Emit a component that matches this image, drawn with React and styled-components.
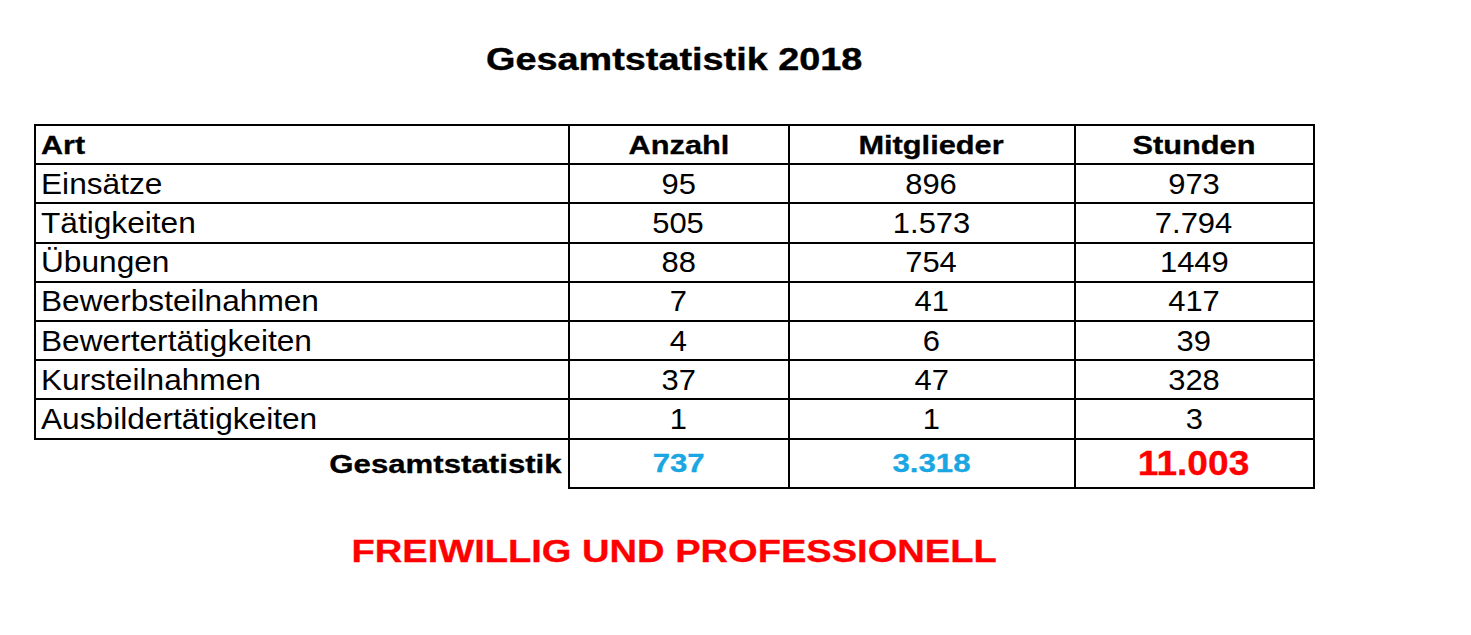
import React from "react";
import styled, { createGlobalStyle } from "styled-components";

const Global = createGlobalStyle`
  html, body { margin: 0; padding: 0; background: #fff; }
  body { font-family: "Liberation Sans", Arial, sans-serif; color: #000; }
`;

const Page = styled.div`
  width: 1471px;
  height: 635px;
  padding: 44px 0 0 34px;
  box-sizing: border-box;
`;

const Column = styled.div`
  width: 1280px;
  display: flex;
  flex-direction: column;
  align-items: center;
`;

const Stretch = styled.span`
  display: inline-block;
  transform: scaleX(${(p) => p.$sx || 1});
  transform-origin: ${(p) => p.$origin || "center"};
  white-space: nowrap;
`;

const Title = styled.h1`
  margin: 0 0 49px;
  font-size: 31px;
  line-height: 31px;
  font-weight: 700;
  -webkit-text-stroke: 0.4px #000;
`;

const Table = styled.table`
  border-collapse: collapse;
  table-layout: fixed;
  width: 1279px;
`;

const Cell = styled.td`
  border: 2px solid #000;
  height: 37.2px;
  padding: 0 ${(p) => (p.$align === "right" ? "6px" : "5px")};
  text-align: ${(p) => p.$align || "center"};
  vertical-align: middle;
  font-size: 30px;
  line-height: 30px;
  font-weight: 400;
  color: ${(p) => p.$color || "#000"};
  white-space: nowrap;
`;

const HeadCell = styled(Cell).attrs({ as: "th" })`
  font-size: 25px;
  font-weight: 700;
  -webkit-text-stroke: 0.3px #000;
`;

const FootCell = styled(Cell)`
  height: 47px;
  font-size: ${(p) => p.$size || 26}px;
  font-weight: 700;
  -webkit-text-stroke: 0.3px ${(p) => p.$color || "#000"};
  ${(p) => (p.$open ? "border-left: none; border-bottom: none;" : "")}
`;

const Slogan = styled.div`
  margin-top: 46px;
  font-size: 32px;
  line-height: 32px;
  font-weight: 700;
  color: #ff0000;
  -webkit-text-stroke: 0.3px #ff0000;
`;

const rows = [
  ["Einsätze", "95", "896", "973"],
  ["Tätigkeiten", "505", "1.573", "7.794"],
  ["Übungen", "88", "754", "1449"],
  ["Bewerbsteilnahmen", "7", "41", "417"],
  ["Bewertertätigkeiten", "4", "6", "39"],
  ["Kursteilnahmen", "37", "47", "328"],
  ["Ausbildertätigkeiten", "1", "1", "3"],
];

export default function App() {
  return (
    <>
      <Global />
      <Page>
        <Column>
          <Title>
            <Stretch $sx={1.22}>Gesamtstatistik 2018</Stretch>
          </Title>
          <Table>
            <colgroup>
              <col style={{ width: 534 }} />
              <col style={{ width: 220 }} />
              <col style={{ width: 286 }} />
              <col style={{ width: 239 }} />
            </colgroup>
            <thead>
              <tr>
                <HeadCell $align="left">
                  <Stretch $sx={1.22} $origin="left">Art</Stretch>
                </HeadCell>
                <HeadCell>
                  <Stretch $sx={1.23}>Anzahl</Stretch>
                </HeadCell>
                <HeadCell>
                  <Stretch $sx={1.23}>Mitglieder</Stretch>
                </HeadCell>
                <HeadCell>
                  <Stretch $sx={1.23}>Stunden</Stretch>
                </HeadCell>
              </tr>
            </thead>
            <tbody>
              {rows.map((r) => (
                <tr key={r[0]}>
                  <Cell $align="left">
                    <Stretch $sx={1.055} $origin="left">{r[0]}</Stretch>
                  </Cell>
                  {r.slice(1).map((v, i) => (
                    <Cell key={i}>
                      <Stretch $sx={1.03}>{v}</Stretch>
                    </Cell>
                  ))}
                </tr>
              ))}
            </tbody>
            <tfoot>
              <tr>
                <FootCell $open $align="right">
                  <Stretch $sx={1.2} $origin="right">Gesamtstatistik</Stretch>
                </FootCell>
                <FootCell $color="#19a6e2">
                  <Stretch $sx={1.2}>737</Stretch>
                </FootCell>
                <FootCell $color="#19a6e2">
                  <Stretch $sx={1.2}>3.318</Stretch>
                </FootCell>
                <FootCell $color="#ff0000" $size={35}>
                  <Stretch $sx={1.06}>11.003</Stretch>
                </FootCell>
              </tr>
            </tfoot>
          </Table>
          <Slogan>
            <Stretch $sx={1.19}>FREIWILLIG UND PROFESSIONELL</Stretch>
          </Slogan>
        </Column>
      </Page>
    </>
  );
}
